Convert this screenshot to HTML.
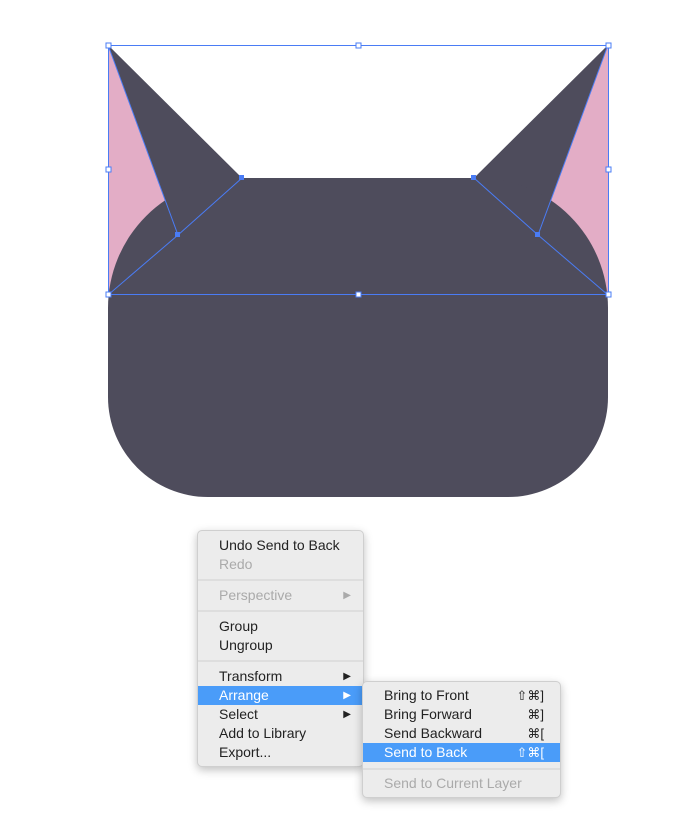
<!DOCTYPE html>
<html><head><style>
body{margin:0;width:700px;height:836px;background:#fff;position:relative;overflow:hidden;font-family:"Liberation Sans",sans-serif;}
.m{position:absolute;background:#ececec;border:1px solid #cfcfcf;border-radius:5px;box-shadow:0 3px 9px rgba(0,0,0,.25);}
.i{position:absolute;left:0;right:0;height:19px;font-size:14px;line-height:19px;color:#222;padding-left:21px;}
.d{color:#aaa}
.h{background:#4a9cf9;color:#fff}
.s{position:absolute;left:0;right:0;height:2px;background:#dedede;}
.a{position:absolute;right:12px;top:0;font-size:10px;}
.k{position:absolute;right:16px;top:0;font-size:13px;}
</style></head><body>
<svg width="700" height="520" style="position:absolute;left:0;top:0">
<polygon points="108,45 178,235 108,295" fill="#e3adc6"/>
<polygon points="608,45 538,235 608,295" fill="#e3adc6"/>
<polygon points="108,45 242,178 178,235" fill="#4e4c5c"/>
<polygon points="608,45 474,178 538,235" fill="#4e4c5c"/>
<path d="M238,178 H478 A130,130 0 0 1 608,308 V397 A100,100 0 0 1 508,497 H208 A100,100 0 0 1 108,397 V308 A130,130 0 0 1 238,178 Z" fill="#4e4c5c"/>
<g stroke="#4a7cf5" stroke-width="1" fill="none">
<rect x="108.5" y="45.5" width="500" height="249"/>
<polyline points="108,45 178,235 242,178"/>
<polyline points="608,45 538,235 474,178"/>
<line x1="108" y1="295" x2="178" y2="235"/><line x1="608" y1="295" x2="538" y2="235"/>
</g>
<g fill="#fff" stroke="#4a7cf5">
<rect x="106" y="43" width="5" height="5"/><rect x="356" y="43" width="5" height="5"/><rect x="606" y="43" width="5" height="5"/>
<rect x="106" y="167" width="5" height="5"/><rect x="606" y="167" width="5" height="5"/>
<rect x="106" y="292" width="5" height="5"/><rect x="356" y="292" width="5" height="5"/><rect x="606" y="292" width="5" height="5"/>
</g>
<g fill="#4a7cf5"><rect x="239" y="175" width="5" height="5"/><rect x="175" y="232" width="5" height="5"/><rect x="471" y="175" width="5" height="5"/><rect x="535" y="232" width="5" height="5"/></g>
</svg>
<div class="m" style="left:197px;top:530px;width:165px;height:235px">
<div class="i" style="top:5px">Undo Send to Back</div>
<div class="i d" style="top:24px">Redo</div>
<div class="s" style="top:48px"></div>
<div class="i d" style="top:55px">Perspective<span class="a">▶</span></div>
<div class="s" style="top:79px"></div>
<div class="i" style="top:86px">Group</div>
<div class="i" style="top:105px">Ungroup</div>
<div class="s" style="top:129px"></div>
<div class="i" style="top:136px">Transform<span class="a">▶</span></div>
<div class="i h" style="top:155px">Arrange<span class="a">▶</span></div>
<div class="i" style="top:174px">Select<span class="a">▶</span></div>
<div class="i" style="top:193px">Add to Library</div>
<div class="i" style="top:212px">Export...</div>
</div>
<div class="m" style="left:362px;top:681px;width:197px;height:115px">
<div class="i" style="top:4px">Bring to Front<span class="k">⇧⌘]</span></div>
<div class="i" style="top:23px">Bring Forward<span class="k">⌘]</span></div>
<div class="i" style="top:42px">Send Backward<span class="k">⌘[</span></div>
<div class="i h" style="top:61px">Send to Back<span class="k">⇧⌘[</span></div>
<div class="s" style="top:86px"></div>
<div class="i d" style="top:92px">Send to Current Layer</div>
</div>
</body></html>
